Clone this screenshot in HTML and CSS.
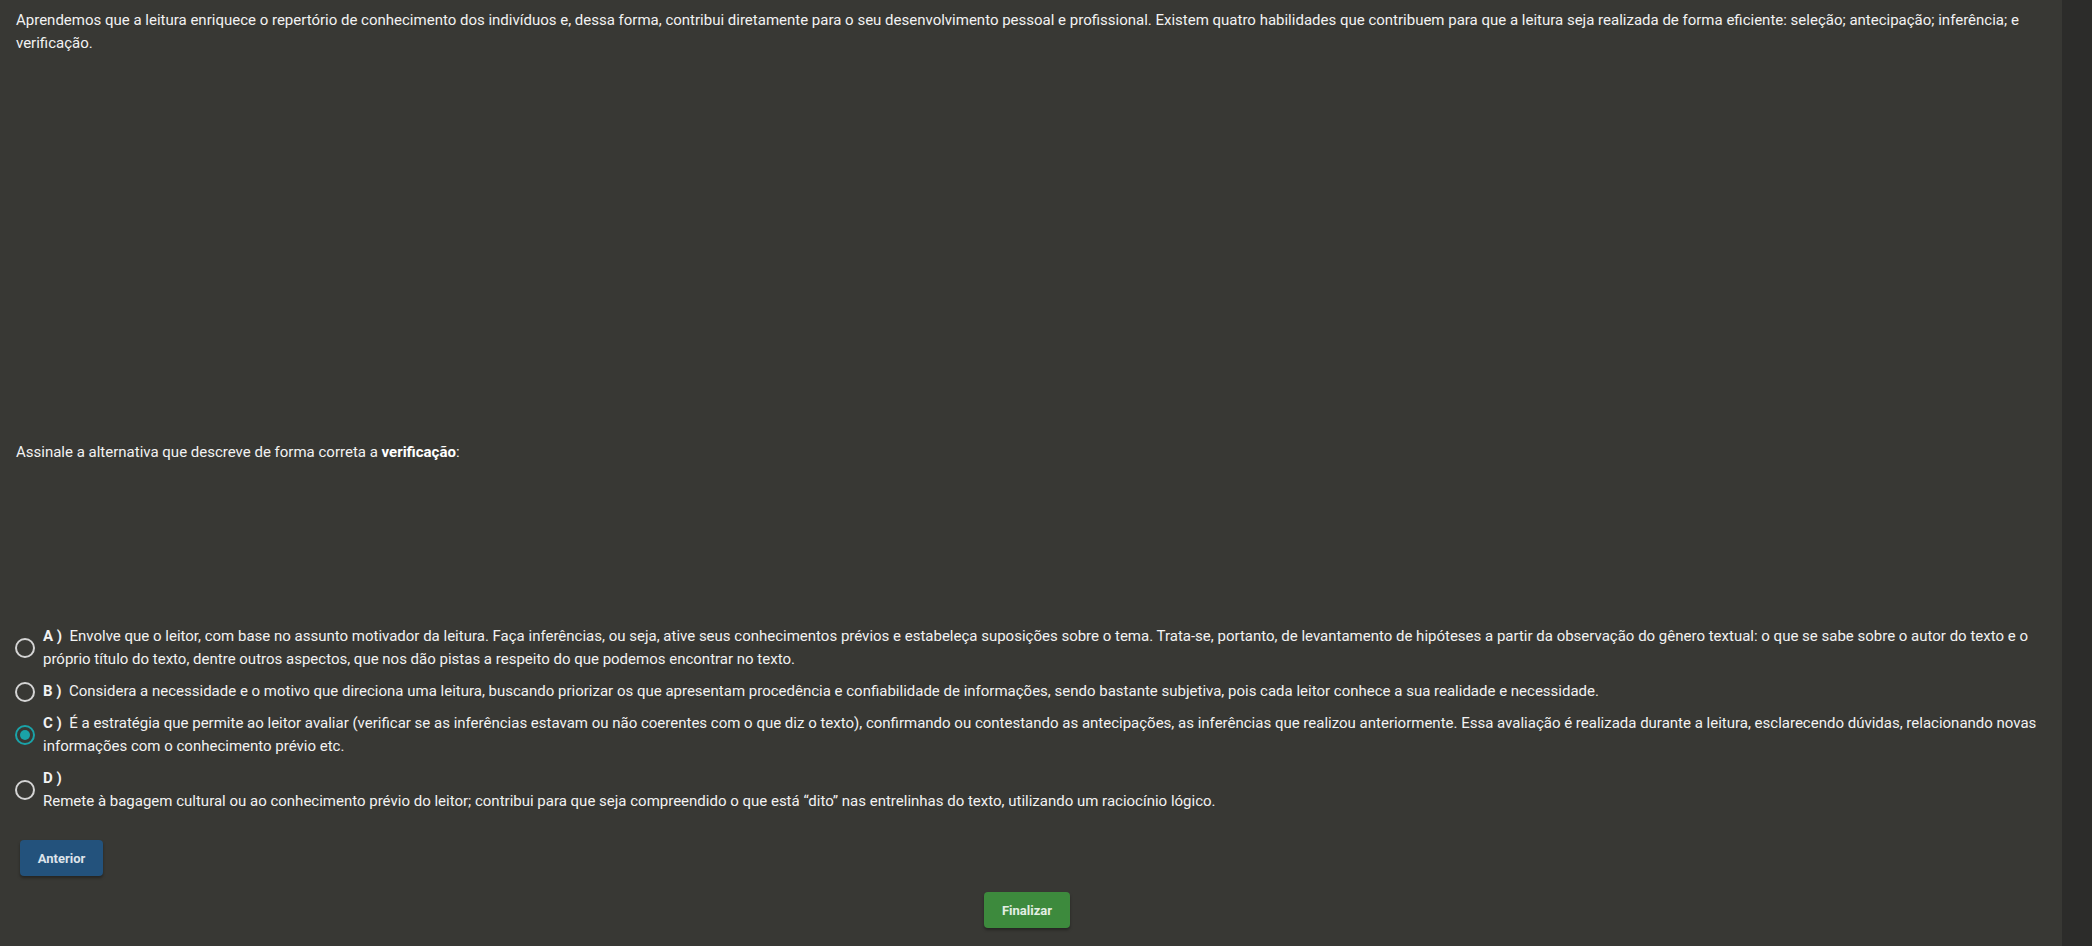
FILE: index.html
```html
<!DOCTYPE html>
<html lang="pt-BR">
<head>
<meta charset="utf-8">
<title>Questão</title>
<link rel="stylesheet" href="styles.css">
</head>
<body>
<div class="page">
  <main class="main">
    <p class="intro">Aprendemos que a leitura enriquece o repertório de conhecimento dos indivíduos e, dessa forma, contribui diretamente para o seu desenvolvimento pessoal e profissional. Existem quatro habilidades que contribuem para que a leitura seja realizada de forma eficiente: seleção; antecipação; inferência; e verificação.</p>
    <p class="prompt">Assinale a alternativa que descreve de forma correta a <strong>verificação</strong>:</p>
    <div class="options">
      <label class="option">
        <span class="radio"></span>
        <span class="opt-text"><b class="letter">A )</b>&nbsp; Envolve que o leitor, com base no assunto motivador da leitura. Faça inferências, ou seja, ative seus conhecimentos prévios e estabeleça suposições sobre o tema. Trata-se, portanto, de levantamento de hipóteses a partir da observação do gênero textual: o que se sabe sobre o autor do texto e o próprio título do texto, dentre outros aspectos, que nos dão pistas a respeito do que podemos encontrar no texto.</span>
      </label>
      <label class="option">
        <span class="radio"></span>
        <span class="opt-text"><b class="letter">B )</b>&nbsp; Considera a necessidade e o motivo que direciona uma leitura, buscando priorizar os que apresentam procedência e confiabilidade de informações, sendo bastante subjetiva, pois cada leitor conhece a sua realidade e necessidade.</span>
      </label>
      <label class="option">
        <span class="radio checked"></span>
        <span class="opt-text"><b class="letter">C )</b>&nbsp; É a estratégia que permite ao leitor avaliar (verificar se as inferências estavam ou não coerentes com o que diz o texto), confirmando ou contestando as antecipações, as inferências que realizou anteriormente. Essa avaliação é realizada durante a leitura, esclarecendo dúvidas, relacionando novas informações com o conhecimento prévio etc.</span>
      </label>
      <label class="option">
        <span class="radio"></span>
        <span class="opt-text"><b class="letter">D )</b><span class="block">Remete à bagagem cultural ou ao conhecimento prévio do leitor; contribui para que seja compreendido o que está “dito” nas entrelinhas do texto, utilizando um raciocínio lógico.</span></span>
      </label>
    </div>
    <div class="nav">
      <button class="btn btn-prev">Anterior</button>
    </div>
    <div class="finish">
      <button class="btn btn-finish">Finalizar</button>
    </div>
  </main>
  <aside class="side"></aside>
</div>
</body>
</html>
```

FILE: styles.css
```css
html, body {
  margin: 0;
  padding: 0;
  height: 100%;
}
body {
  background: #383834;
  color: #f2f2f2;
  font-family: Roboto, "Liberation Sans", sans-serif;
  font-size: 15px;
  line-height: 23px;
}
.page {
  display: flex;
  height: 946px;
}
.main {
  flex: 1;
  background: #383834;
  padding: 9px 16px 0 16px;
  min-width: 0;
}
.side {
  width: 30px;
  background: #2c2c2a;
}
.intro {
  margin: 0;
}
.prompt {
  margin: 386px 0 0 0;
}
.prompt strong {
  font-weight: 700;
  color: #ffffff;
}
.options {
  margin-top: 161px;
  display: flex;
  flex-direction: column;
  gap: 9px;
}
.option {
  display: flex;
  align-items: center;
  gap: 8px;
}
.radio {
  flex: none;
  width: 16px;
  height: 16px;
  border: 2px solid #d4d4d4;
  border-radius: 50%;
  margin-left: -1px;
  position: relative;
}
.radio.checked {
  border-color: #1aa3a8;
}
.radio.checked::after {
  content: "";
  position: absolute;
  left: 3px;
  top: 3px;
  width: 10px;
  height: 10px;
  border-radius: 50%;
  background: #1aa3a8;
}
.opt-text {
  flex: 1;
  min-width: 0;
}
.letter {
  font-weight: 700;
}
.block {
  display: block;
}
.nav {
  margin-top: 27px;
}
.btn {
  font-family: Roboto, "Liberation Sans", sans-serif;
  font-weight: 700;
  font-size: 13px;
  color: #dde3ea;
  border: none;
  border-radius: 4px;
  height: 36px;
  box-shadow: 0 2px 3px rgba(0, 0, 0, 0.35);
}
.btn-prev {
  background: #23527c;
  width: 83px;
  margin-left: 4px;
}
.finish {
  margin-top: 16px;
  padding-right: 8px;
  display: flex;
  justify-content: center;
}
.btn-finish {
  background: #3d8a3d;
  width: 86px;
  color: #e4eee4;
}
```
